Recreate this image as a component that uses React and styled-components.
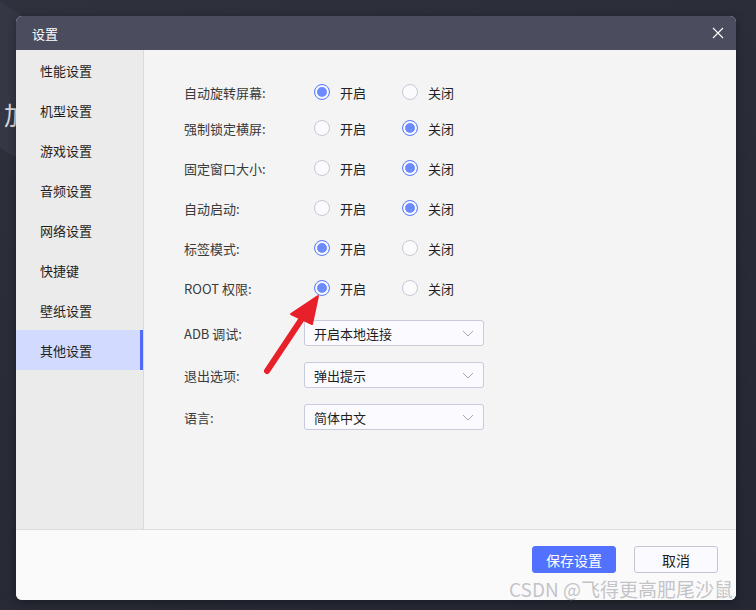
import React, { useState } from "react";
import styled, { createGlobalStyle } from "styled-components";

const GlobalStyle = createGlobalStyle`
  html, body {
    margin: 0;
    padding: 0;
    background: #282b35;
  }
  * {
    box-sizing: border-box;
  }
`;

const FONT = `"Noto Sans CJK SC", "Noto Sans", sans-serif`;

const Screen = styled.div`
  position: relative;
  width: 756px;
  height: 610px;
  overflow: hidden;
  padding: 16px 20px 10px 16px;
  font-family: ${FONT};
  background: linear-gradient(160deg, #2f323d 0%, #2a2d37 40%, #252832 100%);
`;

// lighter shape behind the dialog, part of the app underneath
const BackShape = styled.div`
  position: absolute;
  left: -60px;
  top: 14px;
  width: 120px;
  height: 120px;
  background: #353844;
  transform: rotate(35deg);
`;

const BackGlyph = styled.div`
  position: absolute;
  left: 4px;
  top: 96px;
  font-size: 25px;
  color: #d8d9de;
`;

const Dialog = styled.div`
  position: relative;
  width: 720px;
  height: 584px;
  border-radius: 6px;
  overflow: hidden;
  display: flex;
  flex-direction: column;
  background: #fafafa;
  box-shadow: 0 2px 10px rgba(0, 0, 0, 0.35);
`;

const Header = styled.div`
  height: 34px;
  flex: none;
  display: flex;
  align-items: center;
  justify-content: space-between;
  padding: 0 11px 0 16px;
  background: #4b4d5e;
  color: #fff;
  font-size: 13px;
`;

const CloseButton = styled.button`
  width: 14px;
  height: 14px;
  padding: 0;
  border: none;
  background: none;
  display: flex;
  align-items: center;
  justify-content: center;
  cursor: pointer;
`;

const Body = styled.div`
  flex: 1;
  display: flex;
  min-height: 0;
`;

const Sidebar = styled.div`
  width: 128px;
  flex: none;
  background: #ebebeb;
  border-right: 1px solid #dadada;
`;

const NavItem = styled.div`
  height: 40px;
  display: flex;
  align-items: center;
  padding-left: 24px;
  font-size: 13px;
  color: #1e1e1e;
  background: ${(p) => (p.$active ? "#d2dbff" : "transparent")};
  box-shadow: ${(p) => (p.$active ? "inset -3px 0 0 #4e6cf6" : "none")};
  cursor: pointer;
`;

const Content = styled.div`
  flex: 1;
  background: #f4f4f4;
  padding: 22px 0 0 40px;
`;

const Row = styled.div`
  height: ${(p) => p.$h || 40}px;
  margin-top: ${(p) => p.$mt || 0}px;
  display: flex;
  align-items: center;
`;

const Label = styled.div`
  width: ${(p) => p.$w}px;
  flex: none;
  font-size: 13px;
  color: #3a3a3a;
`;

const Option = styled.label`
  width: 88px;
  display: flex;
  align-items: center;
  gap: 10px;
  font-size: 13px;
  color: #222;
  cursor: pointer;
`;

const RadioDot = styled.span`
  width: 16px;
  height: 16px;
  border-radius: 50%;
  flex: none;
  background: #fbfbfd;
  border: 1px solid ${(p) => (p.$on ? "#5a7bff" : "#c6c8d6")};
  box-shadow: ${(p) => (p.$on ? "inset 0 0 0 2px #fff, inset 0 0 0 8px #6d8bff" : "none")};
`;

const Select = styled.div`
  width: 180px;
  height: 26px;
  display: flex;
  align-items: center;
  justify-content: space-between;
  padding: 0 9px;
  border: 1px solid #c8cbdb;
  border-radius: 3px;
  background: #fbfbff;
  font-size: 13px;
  color: #1e1e1e;
  cursor: pointer;
`;

const Footer = styled.div`
  height: 71px;
  flex: none;
  display: flex;
  justify-content: flex-end;
  align-items: flex-start;
  gap: 18px;
  padding: 16px 18px 0 0;
  border-top: 1px solid #dcdcdc;
  background: #fafafa;
`;

const Button = styled.button`
  width: 84px;
  height: 27px;
  border-radius: 3px;
  font-family: ${FONT};
  font-size: 14px;
  cursor: pointer;
  border: 1px solid ${(p) => (p.$primary ? "#5271ff" : "#c3c6d6")};
  background: ${(p) => (p.$primary ? "#5271ff" : "#fbfbff")};
  color: ${(p) => (p.$primary ? "#fff" : "#1e1e1e")};
`;

const Annotation = styled.svg`
  position: absolute;
  left: 0;
  top: 0;
  pointer-events: none;
`;

const Watermark = styled.div`
  position: absolute;
  left: 509px;
  top: 576px;
  font-size: 19px;
  line-height: 26px;
  color: rgba(185, 185, 190, 0.85);
  white-space: nowrap;
  pointer-events: none;
`;

const navItems = ["性能设置", "机型设置", "游戏设置", "音频设置", "网络设置", "快捷键", "壁纸设置", "其他设置"];

const radioRows = [
  { label: "自动旋转屏幕:", on: true, mt: 0 },
  { label: "强制锁定横屏:", on: false, mt: -4 },
  { label: "固定窗口大小:", on: false },
  { label: "自动启动:", on: false },
  { label: "标签模式:", on: true },
  { label: "ROOT 权限:", on: true },
];

const selectRows = [
  { label: "ADB 调试:", value: "开启本地连接", mt: 12 },
  { label: "退出选项:", value: "弹出提示", mt: 16 },
  { label: "语言:", value: "简体中文", mt: 16 },
];

const Chevron = () => (
  <svg width="12" height="7" viewBox="0 0 12 7">
    <path d="M1 1 L6 6 L11 1" fill="none" stroke="#a4a6b4" strokeWidth="1" />
  </svg>
);

const App = () => {
  const [active, setActive] = useState(7);
  const [values, setValues] = useState(radioRows.map((r) => r.on));

  const toggle = (idx, on) =>
    setValues((prev) => prev.map((v, i) => (i === idx ? on : v)));

  return (
    <Screen>
      <GlobalStyle />
      <BackShape />
      <BackGlyph>加</BackGlyph>
      <Dialog>
        <Header>
          <span>设置</span>
          <CloseButton>
            <svg width="12" height="12" viewBox="0 0 12 12">
              <path d="M1 1 L11 11 M11 1 L1 11" stroke="#fff" strokeWidth="1.1" />
            </svg>
          </CloseButton>
        </Header>
        <Body>
          <Sidebar>
            {navItems.map((item, i) => (
              <NavItem key={item} $active={i === active} onClick={() => setActive(i)}>
                {item}
              </NavItem>
            ))}
          </Sidebar>
          <Content>
            {radioRows.map((row, i) => (
              <Row key={row.label} $mt={row.mt}>
                <Label $w={130}>{row.label}</Label>
                <Option onClick={() => toggle(i, true)}>
                  <RadioDot $on={values[i]} />
                  开启
                </Option>
                <Option onClick={() => toggle(i, false)}>
                  <RadioDot $on={!values[i]} />
                  关闭
                </Option>
              </Row>
            ))}
            {selectRows.map((row) => (
              <Row key={row.label} $h={26} $mt={row.mt}>
                <Label $w={120}>{row.label}</Label>
                <Select>
                  <span>{row.value}</span>
                  <Chevron />
                </Select>
              </Row>
            ))}
          </Content>
        </Body>
        <Footer>
          <Button $primary>保存设置</Button>
          <Button>取消</Button>
        </Footer>
      </Dialog>

      <Annotation width="756" height="610" viewBox="0 0 756 610">
        <line x1="267" y1="371" x2="303" y2="317" stroke="#e8202a" strokeWidth="6" strokeLinecap="round" />
        <polygon points="318,296 291,314 312,324" fill="#e8202a" stroke="#e8202a" strokeWidth="2" strokeLinejoin="round" />
      </Annotation>
      <Watermark>CSDN @飞得更高肥尾沙鼠</Watermark>
    </Screen>
  );
};

export default App;
